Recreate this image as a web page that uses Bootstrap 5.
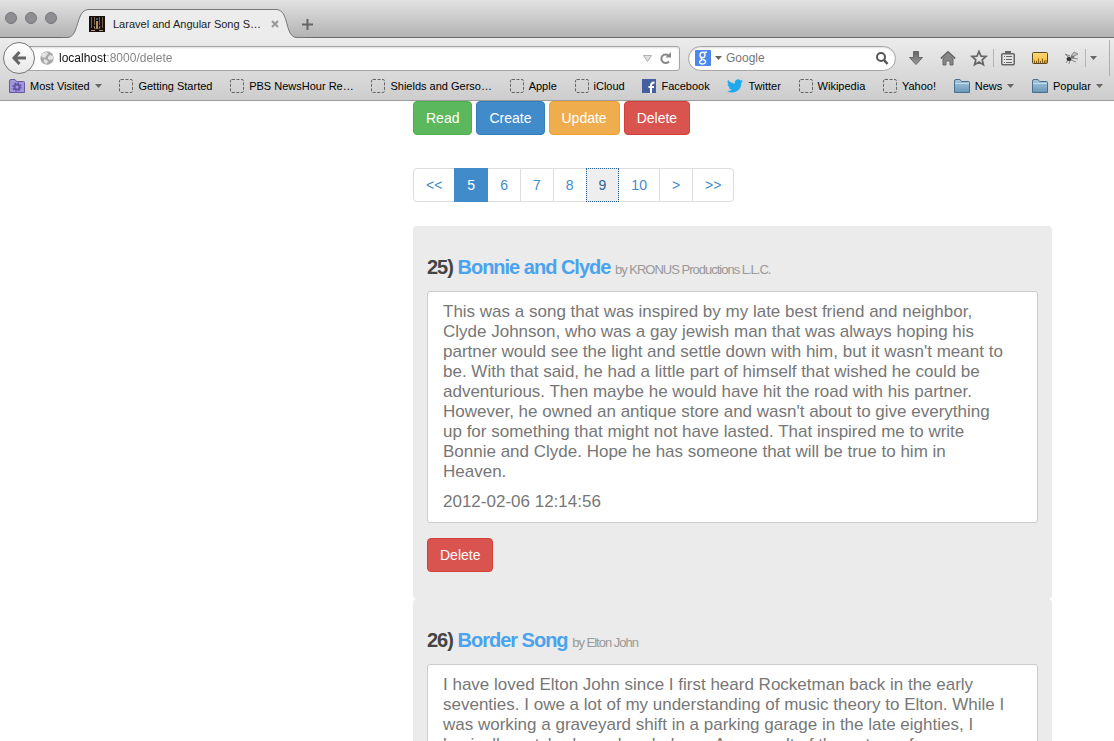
<!DOCTYPE html>
<html lang="en">
<head>
<meta charset="utf-8">
<meta name="viewport" content="width=device-width, initial-scale=1">
<title>Laravel and Angular Song Share</title>
<link href="https://cdn.jsdelivr.net/npm/bootstrap@5.3.0/dist/css/bootstrap.min.css" rel="stylesheet">
<style>
  body { font-family: "Liberation Sans", Arial, sans-serif; font-size: 14px; line-height: 20px; height: 100vh; overflow: hidden; background: #fff; }
  svg { display: block; flex: none; overflow: visible; }
  button.plain { border: 0; padding: 0; background: none; flex: none; }

  /* browser window */
  .tabstrip { height: 38px; padding-left: 5px; background: linear-gradient(#e2e2e2, #b3b3b3); border-bottom: 1px solid #6b6b6b; }
  .lights { gap: 8px; margin-top: 12px; }
  .lights button.plain { width: 12px; height: 12px; border-radius: 50%; background: #8d8d92; border: 1px solid #77777b; }
  .tab { width: 236px; height: 29px; margin: 9px 0 0 12px; padding: 0 26px 0 20px; font-size: 11px; color: #222; }
  .tab-shape { position: absolute; left: 0; top: 0; }
  .tab > :not(.tab-shape) { position: relative; }
  .newtab { margin: 19px 0 0 -3px; }
  .toolbars { background: linear-gradient(#ececec, #cdcdcd); border-bottom: 1px solid #9c9c9c; }
  .navbar-row { height: 40px; padding: 0 4px 0 3px; }
  .back { width: 32px; height: 32px; border-radius: 50%; border: 1px solid #777 !important; background: linear-gradient(#fff, #e8e8e8) !important; z-index: 1; }
  .address { height: 25px; margin-left: -16px; padding: 0 8px 0 20px; background: #fff; border: 1px solid #a5a5a5; border-radius: 3px; box-shadow: inset 0 1px 2px #ddd; }
  .search { width: 208px; height: 25px; margin-left: 8px; padding: 0 7px 0 6px; background: #fff; border: 1px solid #a5a5a5; border-radius: 13px; box-shadow: inset 0 1px 2px #ddd; }
  .address input, .search input { border: 0; outline: 0; padding: 0; font-size: 12px; line-height: 20px; min-width: 0; flex: 1; background: none; }
  .address input { margin-left: 5px; color: transparent; background: linear-gradient(90deg, #111 48px, #808080 48px); -webkit-background-clip: text; background-clip: text; }
  .search input { margin-left: 4px; }
  .search input::placeholder { color: #777; opacity: 1; }
  .tools { gap: 16px; margin-left: 12px; }
  .tools-pair { gap: 6px; margin-left: -1px; }
  .tools-end { gap: 4px; margin-left: -11px; }
  .rule { width: 1px; height: 18px; background: #b4b4b4; }
  .rule-tall { width: 1px; height: 36px; margin-left: 8px; background: #a9b0b8; }
  .bookmarks { height: 22px; padding: 0 11px 6px 9px; font-size: 11px; }
  .bookmarks a { color: #000; text-decoration: none; white-space: nowrap; gap: 5px; }

  /* song pages */
  .songs { padding: 0 62px 0 413px; }
  .action { --bs-btn-font-size: 14px; --bs-btn-line-height: 20px; --bs-btn-padding-y: 6px; --bs-btn-padding-x: 12px; --bs-btn-border-radius: 4px; --bs-btn-color: #fff; color: #fff; }
  .act-read { background: #5cb85c; border-color: #4cae4c; }
  .act-create { background: #428bca; border-color: #357ebd; }
  .act-update { background: #f0ad4e; border-color: #eea236; }
  .act-delete { background: #d9534f; border-color: #d43f3a; }
  .pagination { --bs-pagination-font-size: 14px; --bs-pagination-padding-x: 12px; --bs-pagination-padding-y: 6px; --bs-pagination-color: #428bca; --bs-pagination-active-bg: #428bca; --bs-pagination-active-border-color: #428bca; --bs-pagination-border-color: #ddd; --bs-pagination-border-radius: 4px; margin: 33px 0 24px; }
  .pagination .visited-page { z-index: 1; background: #eee; color: #2a6496; outline: 1px dotted #2a6496; outline-offset: -1px; }
  .song { background: #ebebeb; border-radius: 4px; padding: 31px 14px 27px; }
  .song h2 { font-size: 20px; line-height: 20px; font-weight: 700; letter-spacing: -1px; color: #444; margin: 0 0 11px; }
  .song h2 a { color: #4aa3ee; text-decoration: none; }
  .song h2 small { font-size: 13px; font-weight: 400; color: #999; }
  .notes { background: #fff; border: 1px solid #ccc; border-radius: 3px; padding: 10px 30px 10px 15px; margin-bottom: 15px; font-size: 17px; line-height: 20px; color: #777; }
  .notes p { margin: 0 0 10px; }
  .notes p:last-child { margin: 0; }
</style>
</head>
<body>
<svg width="0" height="0" class="position-absolute" aria-hidden="true">
  <defs>
    <linearGradient id="blue" x2="0" y2="1"><stop stop-color="#a9c8de"/><stop offset="1" stop-color="#6997b9"/></linearGradient>
    <linearGradient id="gold" x2="0" y2="1"><stop stop-color="#ffd873"/><stop offset="1" stop-color="#f5b73c"/></linearGradient>
    <linearGradient id="steel" x2="0" y2="1"><stop stop-color="#666"/><stop offset="1" stop-color="#999"/></linearGradient>
    <symbol id="blank" viewBox="0 0 14 14"><rect x=".5" y=".5" width="13" height="13" rx="1.5" fill="none" stroke="#666" stroke-dasharray="3 1.5"/></symbol>
    <symbol id="folder" viewBox="0 0 16 14"><path d="M.5 13.5V2Q.5.5 2 .5h4L7.500 2.500h7q1 0 1 1v10z" fill="url(#blue)" stroke="#48708e"/><path d="M1 4.500h14" stroke="#c4dbea"/></symbol>
    <symbol id="caret" viewBox="0 0 7 4"><path d="M0 0h7L3.500 4z" fill="#666"/></symbol>
  </defs>
</svg>

<header>
  <div class="tabstrip d-flex align-items-start">
    <div class="lights d-flex">
      <button class="plain" aria-label="Close window"></button>
      <button class="plain" aria-label="Minimize window"></button>
      <button class="plain" aria-label="Zoom window"></button>
    </div>
    <div class="tab position-relative d-flex align-items-center">
      <svg class="tab-shape" width="236" height="30" viewBox="0 0 236 30"><path d="M-7 28.500H-2C11 28.500 6 .5 20 .5H207C221 .5 215 28.500 228 28.500H236V30H-7z" fill="#ececec"/><path d="M-7 28.500H-2C11 28.500 6 .5 20 .5H207C221 .5 215 28.500 228 28.500H236" fill="none" stroke="#777"/></svg>
      <svg width="16" height="16" viewBox="0 0 16 16"><path fill="#15100e" d="M0 0h16v16H0z"/><path d="M2.500 1v11M5.500 1v8M10.500 1v8M13.500 1v11" stroke="#7c6344"/><path d="M5 10l1 3M7.500 5v8M8.500 5v8M11 10l-1 3" stroke="#b08f63"/><path d="M2 14.500h4M10 14.500h4" stroke="#c79a66"/><path d="M7.500 2h1v2h-1z" fill="#4ac"/></svg>
      <span class="flex-grow-1 text-nowrap ms-2">Laravel and Angular Song S…</span>
      <button class="plain" aria-label="Close tab"><svg width="8" height="8" viewBox="0 0 8 8"><path d="m1 1 6 6M7 1 1 7" stroke="#999" stroke-width="2"/></svg></button>
    </div>
    <button class="plain newtab" aria-label="New tab"><svg width="11" height="11" viewBox="0 0 11 11"><path d="M5.500 0v11M0 5.500h11" stroke="#666" stroke-width="2"/></svg></button>
  </div>

  <div class="toolbars">
    <div class="navbar-row d-flex align-items-center">
      <button class="plain back d-flex align-items-center justify-content-center" aria-label="Back"><svg width="14" height="14" viewBox="0 0 14 14"><path d="M7.500 1 2 7l5.500 6M2 7h12" fill="none" stroke="#666" stroke-width="3"/></svg></button>
      <div class="address d-flex align-items-center flex-grow-1">
        <svg width="14" height="14" viewBox="0 0 14 14"><circle cx="7" cy="7" r="6.700" fill="#a8a8a8"/><path d="M3 2l4-1 1 2-2 2-1 2-3-1-1-2zM8 6l2-2 3 1v3l-3 1-2-1zM4 8l3 1 1 2-2 2-2-2z" fill="#e4e4e4"/></svg>
        <input type="text" aria-label="Address" value="localhost:8000/delete">
        <button class="plain me-2" aria-label="History"><svg width="9" height="7" viewBox="0 0 9 7"><path d="M.5.5h8l-4 6z" fill="#e0e0e0" stroke="#b0b0b0"/></svg></button>
        <button class="plain" aria-label="Reload"><svg width="11" height="12" viewBox="0 0 11 12"><path d="M9 9.500A4.300 4.300 0 1 1 8.500 3.500" fill="none" stroke="#888" stroke-width="2"/><path d="M11 0v5.500H5.500z" fill="#888"/></svg></button>
      </div>
      <div class="search d-flex align-items-center">
        <svg width="16" height="16" viewBox="0 0 16 16"><rect width="16" height="16" rx="1" fill="#4a87ee"/><g fill="none" stroke="#fff" stroke-width="1.400"><ellipse cx="7.500" cy="5" rx="2.500" ry="2.700"/><path d="M9.500 2.300H12M7 7.700C5 9 7 9.300 8.500 9.700 12 10.600 11 14 7.500 14 3.500 14 4 10.700 7 10"/></g></svg>
        <svg class="ms-1" width="7" height="4"><use href="#caret"/></svg>
        <input type="text" aria-label="Search" placeholder="Google">
        <button class="plain" aria-label="Search the web"><svg width="12" height="13" viewBox="0 0 12 13"><circle cx="5" cy="5" r="4" fill="none" stroke="#555" stroke-width="2"/><path d="m8 8 3.500 4" stroke="#555" stroke-width="2.500"/></svg></button>
      </div>
      <div class="tools d-flex align-items-center">
        <button class="plain" aria-label="Downloads"><svg width="16" height="16" viewBox="0 0 16 16"><path d="M5.500 1.500h5v6h4L8 14.500 1.500 7.500h4z" fill="url(#steel)" stroke="#666"/></svg></button>
        <button class="plain" aria-label="Home"><svg width="16" height="16" viewBox="0 0 16 16"><path d="M1 8.500 8 2l7 6.500" fill="none" stroke="#666" stroke-width="2"/><path d="M3 9l5-4.500L13 9v6h-3v-4H6v4H3z" fill="#888" stroke="#666"/></svg></button>
        <div class="tools-pair d-flex align-items-center">
          <button class="plain" aria-label="Bookmark this page"><svg width="16" height="16" viewBox="0 0 16 16"><path d="m8 1.500 2 4.600 5 .4-3.800 3.300 1.200 4.900L8 12l-4.400 2.700 1.200-4.900L1 6.500l5-.4z" fill="#e4e4e4" stroke="#666" stroke-width="1.700"/></svg></button>
          <span class="rule"></span>
          <button class="plain" aria-label="Show bookmarks"><svg width="16" height="16" viewBox="0 0 16 16"><rect x="1.750" y="3.750" width="12.500" height="11" rx="1" fill="#e4e4e4" stroke="#666" stroke-width="1.500"/><path d="M5 1h6v3H5z" fill="#666"/><path d="M4 6.500h1M6 6.500h6M4 9.500h1M6 9.500h6M4 12.500h1M6 12.500h6" stroke="#666"/></svg></button>
        </div>
        <button class="plain" aria-label="Measure"><svg width="16" height="14" viewBox="0 0 16 14"><rect x=".5" y="1.500" width="15" height="11" rx="1" fill="url(#gold)" stroke="#5c4a22"/><path d="M2.500 12V9.500M4.500 12v-2M6.500 12V7.500M8.500 12v-2M10.500 12V7.500M12.500 12V9.500M14 12V9" stroke="#8a6516"/></svg></button>
        <button class="plain" aria-label="Firebug"><svg width="16" height="14" viewBox="0 0 16 14"><path d="M6 5 1 3l4 4M7 5 10 1l4 2-6 3M8 7l6 1M7 9l5 2M4 9l-2 3M6 9l-1 4" fill="#c5c5c5" stroke="#888"/><ellipse cx="5" cy="8" rx="2.500" ry="2" fill="#333"/><ellipse cx="8.500" cy="6" rx="2" ry="1.500" fill="#777"/></svg></button>
        <div class="d-flex align-items-center tools-end">
          <span class="rule"></span>
          <button class="plain" aria-label="More tools"><svg width="7" height="4"><use href="#caret"/></svg></button>
          <span class="rule-tall"></span>
        </div>
      </div>
    </div>
    <nav class="bookmarks d-flex align-items-center justify-content-between" aria-label="Bookmarks">
      <a href="#" class="d-flex align-items-center"><svg width="16" height="14" viewBox="0 0 16 14"><path d="M.5 13.500V2Q.5.5 2 .5h4l1.500 2h7q1 0 1 1v10z" fill="#a397d9" stroke="#665aa5"/><circle cx="8" cy="8" r="2.500" fill="none" stroke="#6255a8" stroke-width="2"/><circle cx="8" cy="8" r="4" fill="none" stroke="#6255a8" stroke-width="1.500" stroke-dasharray="1.600 1.540"/></svg>Most Visited<svg width="7" height="4"><use href="#caret"/></svg></a>
      <a href="#" class="d-flex align-items-center"><svg width="14" height="14"><use href="#blank"/></svg>Getting Started</a>
      <a href="#" class="d-flex align-items-center"><svg width="14" height="14"><use href="#blank"/></svg>PBS NewsHour Re…</a>
      <a href="#" class="d-flex align-items-center"><svg width="14" height="14"><use href="#blank"/></svg>Shields and Gerso…</a>
      <a href="#" class="d-flex align-items-center"><svg width="14" height="14"><use href="#blank"/></svg>Apple</a>
      <a href="#" class="d-flex align-items-center"><svg width="14" height="14"><use href="#blank"/></svg>iCloud</a>
      <a href="#" class="d-flex align-items-center"><svg width="14" height="14" viewBox="0 0 14 14"><path fill="#4560a0" d="M0 0h14v14H0z"/><path d="M9 14V6.500Q9 3.500 12.500 3.500M6.500 8H12" fill="none" stroke="#fff" stroke-width="2"/></svg>Facebook</a>
      <a href="#" class="d-flex align-items-center"><svg width="16" height="14" viewBox="0 0 24 20"><path d="M24 2.400a10 10 0 0 1-2.800.8A5 5 0 0 0 23.300.5a10 10 0 0 1-3.100 1.200 4.900 4.900 0 0 0-8.400 4.500A14 14 0 0 1 1.700 1a4.900 4.900 0 0 0 1.500 6.600 5 5 0 0 1-2.200-.6 4.900 4.900 0 0 0 3.900 4.900 5 5 0 0 1-2.200 0 4.900 4.900 0 0 0 4.600 3.400A10 10 0 0 1 0 17.500a14 14 0 0 0 21.500-12.400A10 10 0 0 0 24 2.400z" fill="#1da9ec"/></svg>Twitter</a>
      <a href="#" class="d-flex align-items-center"><svg width="14" height="14"><use href="#blank"/></svg>Wikipedia</a>
      <a href="#" class="d-flex align-items-center"><svg width="14" height="14"><use href="#blank"/></svg>Yahoo!</a>
      <a href="#" class="d-flex align-items-center"><svg width="16" height="14"><use href="#folder"/></svg>News<svg width="7" height="4"><use href="#caret"/></svg></a>
      <a href="#" class="d-flex align-items-center"><svg width="16" height="14"><use href="#folder"/></svg>Popular<svg width="7" height="4"><use href="#caret"/></svg></a>
    </nav>
  </div>
</header>

<main class="songs">
  <div class="d-flex gap-1">
    <button class="btn action act-read">Read</button>
    <button class="btn action act-create">Create</button>
    <button class="btn action act-update">Update</button>
    <button class="btn action act-delete">Delete</button>
  </div>
  <nav aria-label="Song pages">
    <ul class="pagination">
      <li class="page-item"><a class="page-link" href="#">&lt;&lt;</a></li>
      <li class="page-item active"><a class="page-link" href="#">5</a></li>
      <li class="page-item"><a class="page-link" href="#">6</a></li>
      <li class="page-item"><a class="page-link" href="#">7</a></li>
      <li class="page-item"><a class="page-link" href="#">8</a></li>
      <li class="page-item"><a class="page-link visited-page" href="#">9</a></li>
      <li class="page-item"><a class="page-link" href="#">10</a></li>
      <li class="page-item"><a class="page-link" href="#">&gt;</a></li>
      <li class="page-item"><a class="page-link" href="#">&gt;&gt;</a></li>
    </ul>
  </nav>
  <article class="song">
    <h2>25) <a href="#">Bonnie and Clyde</a> <small>by KRONUS Productions L.L.C.</small></h2>
    <div class="notes">
      <p>This was a song that was inspired by my late best friend and neighbor, Clyde Johnson, who was a gay jewish man that was always hoping his partner would see the light and settle down with him, but it wasn't meant to be. With that said, he had a little part of himself that wished he could be adventurious. Then maybe he would have hit the road with his partner. However, he owned an antique store and wasn't about to give everything up for something that might not have lasted. That inspired me to write Bonnie and Clyde. Hope he has someone that will be true to him in Heaven.</p>
      <p>2012-02-06 12:14:56</p>
    </div>
    <button class="btn action act-delete">Delete</button>
  </article>
  <article class="song">
    <h2>26) <a href="#">Border Song</a> <small>by Elton John</small></h2>
    <div class="notes">
      <p>I have loved Elton John since I first heard Rocketman back in the early seventies. I owe a lot of my understanding of music theory to Elton. While I was working a graveyard shift in a parking garage in the late eighties, I basically watched cars break down. As a result of the nature of my position,</p>
    </div>
  </article>
</main>
<script src="https://cdn.jsdelivr.net/npm/bootstrap@5.3.0/dist/js/bootstrap.bundle.min.js"></script>
</body>
</html>
